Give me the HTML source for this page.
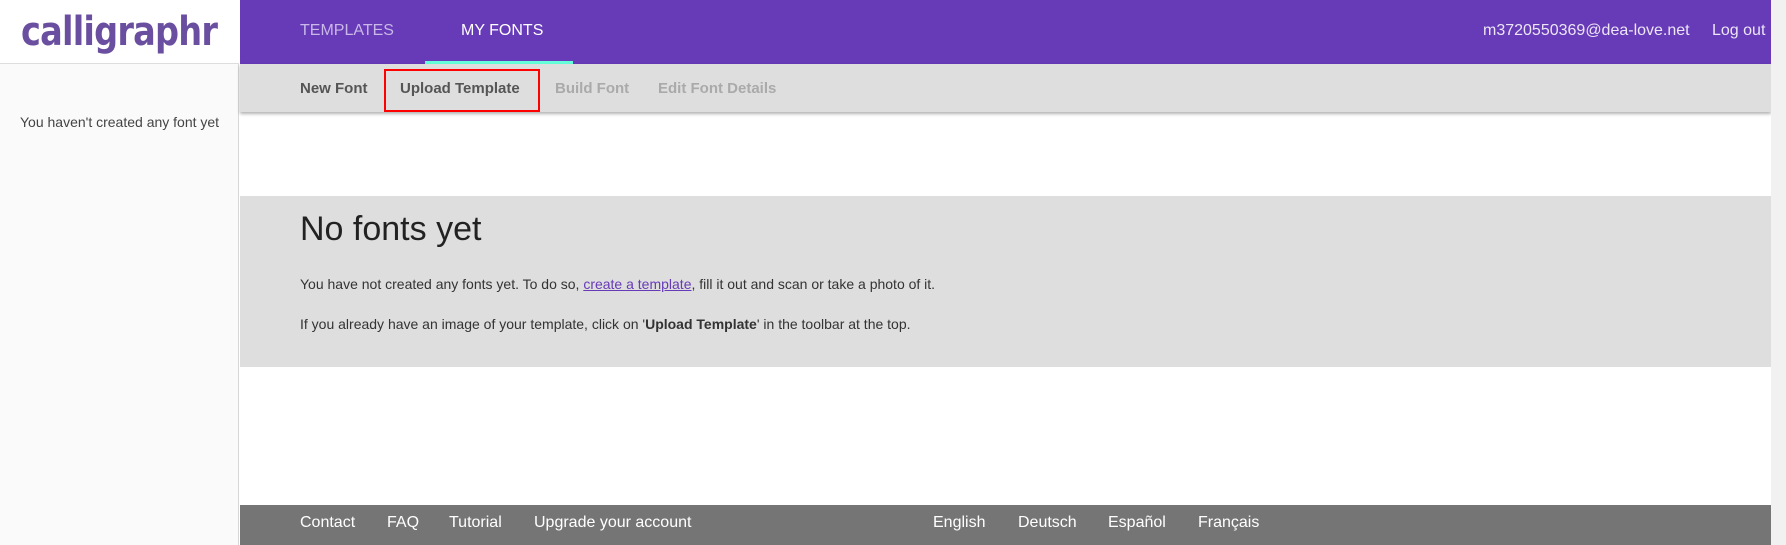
<!DOCTYPE html>
<html><head><meta charset="utf-8"><style>
*{margin:0;padding:0;box-sizing:border-box}
body{width:1786px;height:545px;overflow:hidden;position:relative;background:#fff;font-family:"Liberation Sans",sans-serif}
.a{position:absolute;white-space:nowrap}
#side{left:0;top:0;width:239px;height:545px;background:#fafafa;border-right:1px solid #d8d8d8}
#logo{left:0;top:0;width:239px;height:64px;background:#fff;border-bottom:1px solid #ddd}
#hdr{left:240px;top:0;width:1531px;height:64px;background:#673ab7}
#sub{left:240px;top:64px;width:1531px;height:48px;background:#dedede;box-shadow:0 2px 3px rgba(0,0,0,.3)}
#band{left:240px;top:196px;width:1531px;height:171px;background:#dedede}
#foot{left:240px;top:505px;width:1531px;height:40px;background:#757575}
#sb{left:1771px;top:0;width:15px;height:545px;background:#f1f1f1}
.h{font-size:16px;color:#fff;top:22px}
.s{font-size:15px;font-weight:bold;top:80px}
.f{font-size:16px;color:#fff;top:514px}
.p{font-size:14px;color:#333;left:300px}
</style></head><body>
<div class="a" id="side"></div>
<div class="a" id="logo"></div>
<div class="a" style="left:21px;top:8px;font-size:42px;font-weight:bold;color:#6a4fa0;letter-spacing:-1px;transform:scaleX(0.8) scaleY(0.95);transform-origin:left top;font-family:'DejaVu Sans',sans-serif">calligraphr</div>
<div class="a" style="left:20px;top:114px;font-size:14px;color:#444">You haven't created any font yet</div>
<div class="a" id="hdr"></div>
<div class="a h" style="left:300px;color:#c9b8e8">TEMPLATES</div>
<div class="a h" style="left:461px">MY FONTS</div>
<div class="a" style="left:425px;top:61px;width:148px;height:3px;background:#64ffda"></div>
<div class="a h" style="left:1483px;color:#ece6f6">m3720550369@dea-love.net</div>
<div class="a h" style="left:1712px;color:#ece6f6">Log out</div>
<div class="a" id="sub"></div>
<div class="a s" style="left:300px;color:#555">New Font</div>
<div class="a s" style="left:400px;color:#555">Upload Template</div>
<div class="a" style="left:384px;top:69px;width:156px;height:43px;border:2px solid #f00"></div>
<div class="a s" style="left:555px;color:#aaa">Build Font</div>
<div class="a s" style="left:658px;color:#aaa">Edit Font Details</div>
<div class="a" id="band"></div>
<div class="a" style="left:300px;top:210px;font-size:34px;color:#222">No fonts yet</div>
<div class="a p" style="top:276px">You have not created any fonts yet. To do so, <span style="color:#673ab7;text-decoration:underline">create a template</span>, fill it out and scan or take a photo of it.</div>
<div class="a p" style="top:316px">If you already have an image of your template, click on '<b>Upload Template</b>' in the toolbar at the top.</div>
<div class="a" id="foot"></div>
<div class="a f" style="left:300px">Contact</div>
<div class="a f" style="left:387px">FAQ</div>
<div class="a f" style="left:449px">Tutorial</div>
<div class="a f" style="left:534px">Upgrade your account</div>
<div class="a f" style="left:933px">English</div>
<div class="a f" style="left:1018px">Deutsch</div>
<div class="a f" style="left:1108px">Español</div>
<div class="a f" style="left:1198px">Français</div>
<div class="a" id="sb"></div>
</body></html>
